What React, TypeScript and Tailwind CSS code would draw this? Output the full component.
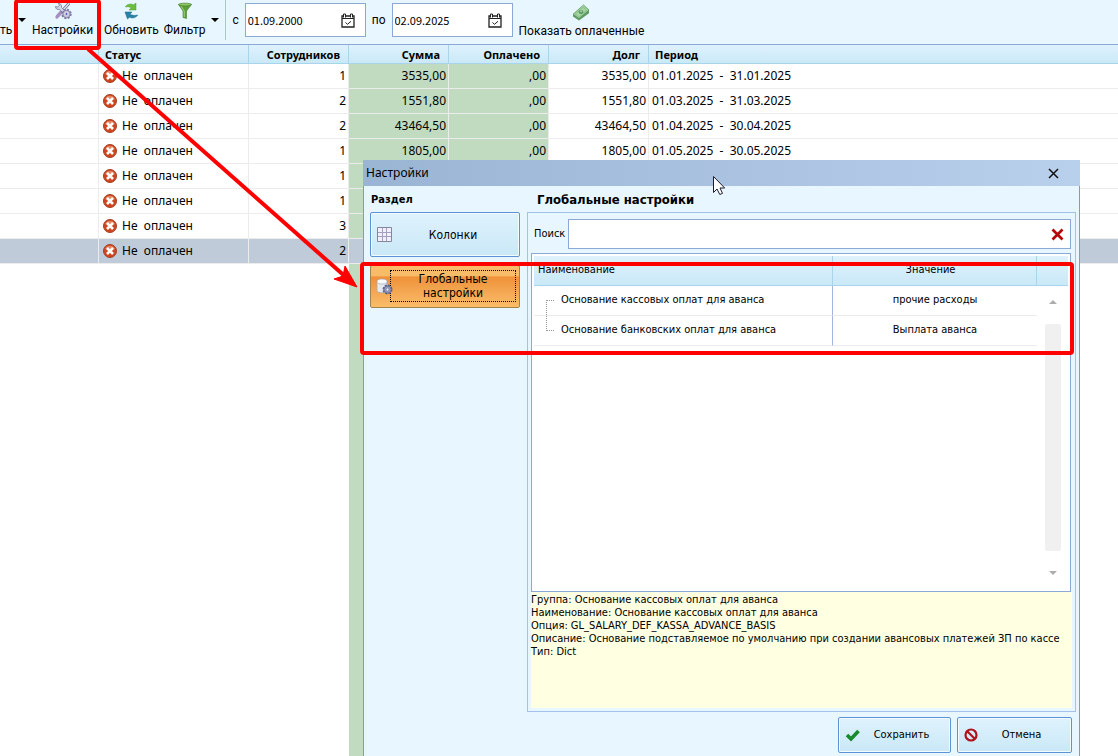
import { useState } from 'react'
import type { ReactNode } from 'react'

const ROWS = [
  { staff: 1, sum: '3535,00', paid: ',00', debt: '3535,00', from: '01.01.2025', to: '31.01.2025' },
  { staff: 2, sum: '1551,80', paid: ',00', debt: '1551,80', from: '01.03.2025', to: '31.03.2025' },
  { staff: 2, sum: '43464,50', paid: ',00', debt: '43464,50', from: '01.04.2025', to: '30.04.2025' },
  { staff: 1, sum: '1805,00', paid: ',00', debt: '1805,00', from: '01.05.2025', to: '30.05.2025' },
  { staff: 1 },
  { staff: 1 },
  { staff: 3 },
  { staff: 2, selected: true },
]

function ToolsIcon() {
  return (
    <svg width="18" height="18" viewBox="0 0 18 18">
      <path d="M14.500 2L4 13.500" stroke="#6f7196" strokeWidth="3" strokeLinecap="round" />
      <path d="M15 1.500L9 8" stroke="#dfe2f0" strokeWidth="1.300" strokeLinecap="round" />
      <path d="M6.500 11L3 15" stroke="#a98fc0" strokeWidth="3.400" strokeLinecap="round" />
      <path d="M1.500 4.500C1.500 7 3.500 8 5.500 7.300L8.500 10.500l2-2-3-3C8 3 6.500 1.300 4.300 1.500L5.500 3.500 3.800 5z" fill="#d3d6e8" stroke="#74769a" strokeWidth=".8" />
      <circle cx="12.500" cy="12" r="4.300" fill="none" stroke="#77799f" strokeWidth="1.800" strokeDasharray="2 1.380" />
      <circle cx="12.500" cy="12" r="3.700" fill="#cfc4de" stroke="#6e7098" strokeWidth=".8" />
      <circle cx="12.500" cy="12" r="1.500" fill="#4a62c4" stroke="#f3f3fa" strokeWidth=".7" />
    </svg>
  )
}

function RefreshIcon() {
  return (
    <svg width="16" height="18" viewBox="0 0 16 18">
      <path d="M2.500 4.500C5 1.800 8 1.500 10.500 2.800L13 1v7H6l2.300-2.200C6.500 4.800 4.500 4.500 2.500 5z" fill="#6bbf3d" stroke="#4a9c2b" strokeWidth=".5" />
      <path d="M14.500 13.500C12 16.200 9 16.500 6.500 15.200L4.500 17 2 10h7l-2 2c2 1.500 4.800 1.800 7.500 1z" fill="#2583a6" stroke="#186482" strokeWidth=".5" />
    </svg>
  )
}

function FilterIcon() {
  return (
    <svg width="16" height="18" viewBox="0 0 16 18">
      <path d="M1.500 2.500L6 9v6.500l3.500 1V9L14.500 2.500z" fill="#5e9e3a" stroke="#43802a" strokeWidth=".6" />
      <path d="M4 4l3.200 5v6" fill="none" stroke="#a5d37f" strokeWidth="1" />
      <ellipse cx="8" cy="2.600" rx="6.500" ry="1.400" fill="#8fc768" stroke="#43802a" strokeWidth=".7" />
    </svg>
  )
}

function MoneyIcon() {
  return (
    <svg width="18" height="18" viewBox="0 0 18 18">
      <path d="M1 11.500L11.500 3 17 7.500v2.800L7 17.500 1 13.500z" fill="#5c9a62" />
      <path d="M1 11.300L11.500 2 17 7 7 15.500z" fill="#a7d6a2" stroke="#59955f" strokeWidth=".8" />
      <path d="M3.300 11.300l8-7L14.700 7.300 7.200 13.800z" fill="none" stroke="#78b57b" strokeWidth=".7" />
      <ellipse cx="9" cy="9" rx="2.400" ry="2" fill="#5d9c64" />
      <path d="M8 8.700c.6-.8 1.400-.8 2 0" stroke="#d8f0d2" fill="none" />
    </svg>
  )
}

function CalendarIcon() {
  return (
    <svg width="14" height="15" viewBox="0 0 14 15" fill="none" stroke="#222">
      <path d="M1 3h12v11H1z" strokeWidth="1.300" />
      <path d="M1 5.500h12" />
      <path d="M2.500 4.500V1h2v3.500M9.500 4.500V1h2v3.500" fill="#fff" />
      <path d="M4.500 9.500l2 1.800 3.500-3" />
    </svg>
  )
}

function StatusIcon() {
  return (
    <svg className="shrink-0" width="14" height="14" viewBox="0 0 14 14">
      <circle cx="7" cy="7" r="6.500" fill="#cf4520" stroke="#a5421f" />
      <path d="M2 5.500a5.200 5.200 0 0 1 10 0C9 4.500 5 4.500 2 5.500z" fill="#e58260" />
      <path d="M4 4l6 6M10 4l-6 6" stroke="#fff" strokeWidth="2.600" />
    </svg>
  )
}

function Caret() {
  return (
    <svg width="8" height="4" viewBox="0 0 8 4">
      <path d="M0 0h8L4 4z" fill="#000" />
    </svg>
  )
}

function ToolButton({ label, icon }: { label: string; icon: ReactNode }) {
  return (
    <button type="button" className="flex flex-col items-center whitespace-nowrap">
      <span className="flex h-[22px] items-center">{icon}</span>
      <span className="leading-4">{label}</span>
    </button>
  )
}

function DateField({ id, label, value }: { id: string; label: string; value: string }) {
  const [date, setDate] = useState(value)
  return (
    <div className="flex items-center gap-[6px]">
      <label htmlFor={id}>{label}</label>
      <div className="flex h-[34px] w-[121px] items-center border border-[#8ba9d6] bg-white pr-[10px] pl-[2px]">
        <input
          id={id}
          value={date}
          onChange={(e) => setDate(e.target.value)}
          className="min-w-0 flex-1 font-['Noto_Sans_CJK_SC','Noto_Sans',sans-serif] text-[11px] outline-none"
        />
        <button type="button" aria-label="Календарь">
          <CalendarIcon />
        </button>
      </div>
    </div>
  )
}

function Toolbar() {
  return (
    <div className="flex h-[45px] items-start overflow-hidden border-b border-[#8aa8d5] bg-[#e8f7ff] font-[Roboto,sans-serif]">
      <div className="flex h-10 shrink-0 items-start">
        <button type="button" className="flex h-[38px] w-3 items-end leading-4">
          ть
        </button>
        <button type="button" aria-label="Ещё" className="flex h-10 w-5 items-center justify-center">
          <Caret />
        </button>
        <ToolButton label="Настройки" icon={<ToolsIcon />} />
        <div className="mr-1 ml-[6px] h-10 w-px bg-[#a9c4ea]" />
        <div className="flex gap-[5px]">
          <ToolButton label="Обновить" icon={<RefreshIcon />} />
          <ToolButton label="Фильтр" icon={<FilterIcon />} />
        </div>
        <button type="button" aria-label="Фильтры" className="flex h-10 w-5 items-center justify-center">
          <Caret />
        </button>
        <div className="h-10 w-px bg-[#a9c4ea]" />
      </div>
      <div className="flex h-10 shrink-0 items-center gap-[6px] pl-[6px]">
        <DateField id="date-from" label="с" value="01.09.2000" />
        <DateField id="date-to" label="по" value="02.09.2025" />
        <ToolButton label="Показать оплаченные" icon={<MoneyIcon />} />
      </div>
    </div>
  )
}

const head = 'border-r border-b border-[#a8d5ea] pt-[2px] font-bold'
const cell = 'border-r border-b border-[#ececec]'

function PaymentsTable() {
  return (
    <table className="w-full table-fixed border-separate border-spacing-0">
      <colgroup>
        <col className="w-[99px]" />
        <col className="w-[150px]" />
        <col className="w-[100px]" />
        <col className="w-[100px]" />
        <col className="w-[100px]" />
        <col className="w-[100px]" />
        <col />
      </colgroup>
      <thead>
        <tr className="h-[19px] bg-linear-to-b from-[#dff2fd] to-[#c9e8f7] text-[11px] leading-4">
          <th className={head} />
          <th className={`${head} pl-[6px] text-left`}>Статус</th>
          <th className={`${head} pr-2 text-right`}>Сотрудников</th>
          <th className={`${head} pr-2 text-right`}>Сумма</th>
          <th className={`${head} pr-2 text-right`}>Оплачено</th>
          <th className={`${head} pr-2 text-right`}>Долг</th>
          <th className="border-b border-[#a8d5ea] pt-[2px] pl-[6px] text-left font-bold">Период</th>
        </tr>
      </thead>
      <tbody>
        {ROWS.map((row, i) => (
          <tr key={i} className={row.selected ? 'h-[25px] bg-[#bfcbd9]' : 'h-[25px]'}>
            <td className={cell} />
            <td className={cell}>
              <span className="flex items-center gap-[5px] pl-1 whitespace-pre">
                <StatusIcon />
                {'Не  оплачен'}
              </span>
            </td>
            <td className={`${cell} pr-[2px] text-right`}>{row.staff}</td>
            <td className={`${cell} pr-[2px] text-right ${row.selected ? '' : 'bg-[#c0dbc0]'}`}>{row.sum}</td>
            <td className={`${cell} pr-[2px] text-right ${row.selected ? '' : 'bg-[#c0dbc0]'}`}>{row.paid}</td>
            <td className={`${cell} pr-[2px] text-right`}>{row.debt}</td>
            <td className="border-b border-[#ececec] pl-[3px] whitespace-pre">
              {row.from && `${row.from}  -  ${row.to}`}
            </td>
          </tr>
        ))}
      </tbody>
    </table>
  )
}

function SettingsTable() {
  return (
    <table className="w-full table-fixed border-separate border-spacing-0 border border-[#8ba9d6] bg-white p-[2px]">
      <colgroup>
        <col />
        <col className="w-[204px]" />
        <col className="w-[31px]" />
      </colgroup>
      <thead>
        <tr className="h-[30px] bg-linear-to-b from-[#dff2fd] to-[#c9e8f7]">
          <th className="border-r border-b border-[#a8d5ea] pl-1 text-left font-normal">Наименование</th>
          <th className="border-r border-b border-[#a8d5ea] pr-2 font-normal">Значение</th>
          <th className="border-b border-[#a8d5ea]" />
        </tr>
      </thead>
      <tbody>
        <tr className="h-[30px]">
          <td className="border-r border-b border-r-[#a3b5dd] border-b-[#ececec]">
            <div className="flex h-[29px] items-center pl-3">
              <span className="mr-[7px] h-[15px] w-2 self-end border-t border-l border-dotted border-[#999]" />
              Основание кассовых оплат для аванса
            </div>
          </td>
          <td className="border-b border-[#ececec] text-center">прочие расходы</td>
          <td rowSpan={3}>
            <div className="flex h-[303px] flex-col items-center justify-between py-[14px]">
              <svg width="8" height="4" viewBox="0 0 8 4">
                <path d="M0 4L4 0l4 4z" fill="#adadad" />
              </svg>
              <div className="h-[227px] w-4 rounded-[2px] bg-[#f0f0f0]" />
              <svg width="8" height="4" viewBox="0 0 8 4">
                <path d="M0 0l4 4 4-4z" fill="#adadad" />
              </svg>
            </div>
          </td>
        </tr>
        <tr className="h-[30px]">
          <td className="border-r border-b border-r-[#a3b5dd] border-b-[#ececec]">
            <div className="flex h-[29px] items-center pl-3">
              <span className="mr-[7px] h-[15px] w-2 self-start border-b border-l border-dotted border-[#999]" />
              Основание банковских оплат для аванса
            </div>
          </td>
          <td className="border-b border-[#ececec] text-center">Выплата аванса</td>
        </tr>
        <tr className="h-[243px]">
          <td colSpan={2} />
        </tr>
      </tbody>
    </table>
  )
}

const plate =
  'relative flex items-center rounded-[2px] border border-[#5b93d6] bg-linear-to-b from-[#dff2fe] to-[#cae8f6] shadow-[inset_0_0_0_1px_#f2fbff]'

function SettingsDialog() {
  const [query, setQuery] = useState('')
  return (
    <section
      aria-label="Настройки"
      className="absolute top-[160px] right-[38px] bottom-0 left-[363px] flex flex-col bg-[#e8f7ff] font-['DejaVu_Sans_Condensed','Noto_Sans',sans-serif] text-[11px]"
    >
      <header className="flex h-[26px] shrink-0 items-center justify-between bg-linear-to-r from-[#9ab4d4] to-[#b9d0ec] pr-[21px] pl-[3px] font-['Noto_Sans',sans-serif] text-xs">
        <h2>Настройки</h2>
        <button type="button" aria-label="Закрыть">
          <svg width="11" height="11" viewBox="0 0 11 11">
            <path d="M1 1l9 9M10 1l-9 9" stroke="#111" strokeWidth="1.500" />
          </svg>
        </button>
      </header>

      <div className="flex flex-1 flex-col gap-[5px] border-x border-[#8f9aa8] pr-[3px] pb-[3px] pl-[6px]">
        <div className="flex flex-1 gap-[7px]">
          <nav className="flex w-[150px] flex-col">
            <h3 className="flex h-[26px] items-center pt-[2px] pl-px font-bold">Раздел</h3>
            <button type="button" className={`${plate} h-[45px]`}>
              <svg className="absolute left-[6px]" width="15" height="15" viewBox="0 0 15 15">
                <path d="M.5.5h14v14H.5z" fill="#f2f0fc" stroke="#85859f" />
                <path d="M5.500 1v13M9.500 1v13M1 5.500h13M1 9.500h13" stroke="#a3a1bd" />
              </svg>
              <span className="flex-1 pl-4 text-center text-xs">Колонки</span>
            </button>
            <button
              type="button"
              className="relative mt-2 flex h-[43px] items-center rounded-[2px] border border-[#a58348] bg-linear-to-b from-[#f8bc68] from-25% via-[#ef9138] via-26% to-[#f9bd69] pr-[3px] pb-px pl-[19px]"
            >
              <svg className="absolute left-[5px]" width="17" height="17" viewBox="0 0 17 17">
                <path d="M1 3.500v9c0 3 10 3 10 0v-9z" fill="#e6e8f0" stroke="#a5a9b9" strokeWidth=".7" />
                <ellipse cx="6" cy="3.500" rx="5" ry="2.500" fill="#fafafe" stroke="#a5a9b9" strokeWidth=".7" />
                <circle cx="11.500" cy="11.500" r="4" fill="#a2a5c4" stroke="#5f638e" strokeWidth="2" strokeDasharray="2 1.140" />
                <circle cx="11.500" cy="11.500" r="3.500" fill="#9fa2c4" stroke="#5f638e" strokeWidth=".8" />
                <circle cx="11.500" cy="11.500" r="1.500" fill="#eef" stroke="#5f638e" strokeWidth=".6" />
              </svg>
              <span className="flex-1 border border-dotted border-black py-px text-center text-xs leading-[14px]">
                Глобальные
                <br />
                настройки
              </span>
            </button>
          </nav>

          <div className="flex min-w-0 flex-1 flex-col">
            <h3 className="flex h-[26px] items-center pt-[2px] pl-[10px] text-[13px] font-bold">Глобальные настройки</h3>
            <div className="flex flex-1 flex-col border border-[#a3c1ea] p-[3px]">
              <div className="mt-[3px] flex items-center gap-[3px] pr-px pl-[3px]">
                <label htmlFor="search">Поиск</label>
                <div className="flex h-[30px] flex-1 items-center border border-[#8ba9d6] bg-white pr-[6px]">
                  <input
                    id="search"
                    value={query}
                    onChange={(e) => setQuery(e.target.value)}
                    className="min-w-0 flex-1 px-1 outline-none"
                  />
                  <button type="button" aria-label="Очистить" onClick={() => setQuery('')}>
                    <svg width="13" height="13" viewBox="0 0 13 13">
                      <path d="M1.500 1.500l10 10M11.500 1.500l-10 10" stroke="#b40707" strokeWidth="2.700" />
                    </svg>
                  </button>
                </div>
              </div>
              <div className="mt-1 pr-px">
                <SettingsTable />
              </div>
              <div className="flex-1 bg-[#ffffe1] pt-px leading-[13px]">
                <p>Группа: Основание кассовых оплат для аванса</p>
                <p>Наименование: Основание кассовых оплат для аванса</p>
                <p>Опция: GL_SALARY_DEF_KASSA_ADVANCE_BASIS</p>
                <p>Описание: Основание подставляемое по умолчанию при создании авансовых платежей ЗП по кассе</p>
                <p>Тип: Dict</p>
              </div>
            </div>
          </div>
        </div>

        <footer className="flex justify-end gap-[6px] pr-1">
          <button type="button" className={`${plate} h-9 w-[113px]`}>
            <svg className="absolute left-[6px]" width="15" height="13" viewBox="0 0 15 13">
              <path d="M2 6l4 4 7.500-8" fill="none" stroke="#178a2c" strokeWidth="3.600" />
            </svg>
            <span className="flex-1 pl-[14px] text-center">Сохранить</span>
          </button>
          <button type="button" className={`${plate} h-9 w-[115px]`}>
            <svg className="absolute left-[6px]" width="14" height="14" viewBox="0 0 14 14" fill="none">
              <circle cx="7" cy="7" r="5.500" stroke="#b0121c" strokeWidth="2.200" />
              <path d="M3 3l8 8" stroke="#b0121c" strokeWidth="2.200" />
            </svg>
            <span className="flex-1 pl-[14px] text-center">Отмена</span>
          </button>
        </footer>
      </div>
    </section>
  )
}

// red marks drawn over the window, plus the mouse pointer
function Annotations() {
  return (
    <svg className="pointer-events-none absolute top-0 left-0" width="1080" height="360" viewBox="0 0 1080 360" fill="none">
      <rect x="16" y="1" width="83" height="47" rx="2" stroke="#f00" strokeWidth="4" />
      <rect x="362" y="264" width="710" height="89" rx="2" stroke="#f00" strokeWidth="4" />
      <path d="M88 49l260 230" stroke="#f00" strokeWidth="4" />
      <path d="M357 287l-23-8 9-3 2-10z" fill="#f00" stroke="#f00" />
      <path d="M713.500 176.500v16l3.500-3.500 2.800 5.500 2.700-1.200-2.500-5.300h4.700z" fill="#fff" stroke="#1c1c2a" />
    </svg>
  )
}

export default function App() {
  return (
    <main className="relative flex min-h-screen flex-col overflow-hidden bg-white font-['Noto_Sans',sans-serif] text-xs text-black">
      <Toolbar />
      <PaymentsTable />
      <div className="flex flex-1">
        <div className="ml-[349px] w-[200px] bg-[#c0dbc0]" />
      </div>
      <SettingsDialog />
      <Annotations />
    </main>
  )
}
